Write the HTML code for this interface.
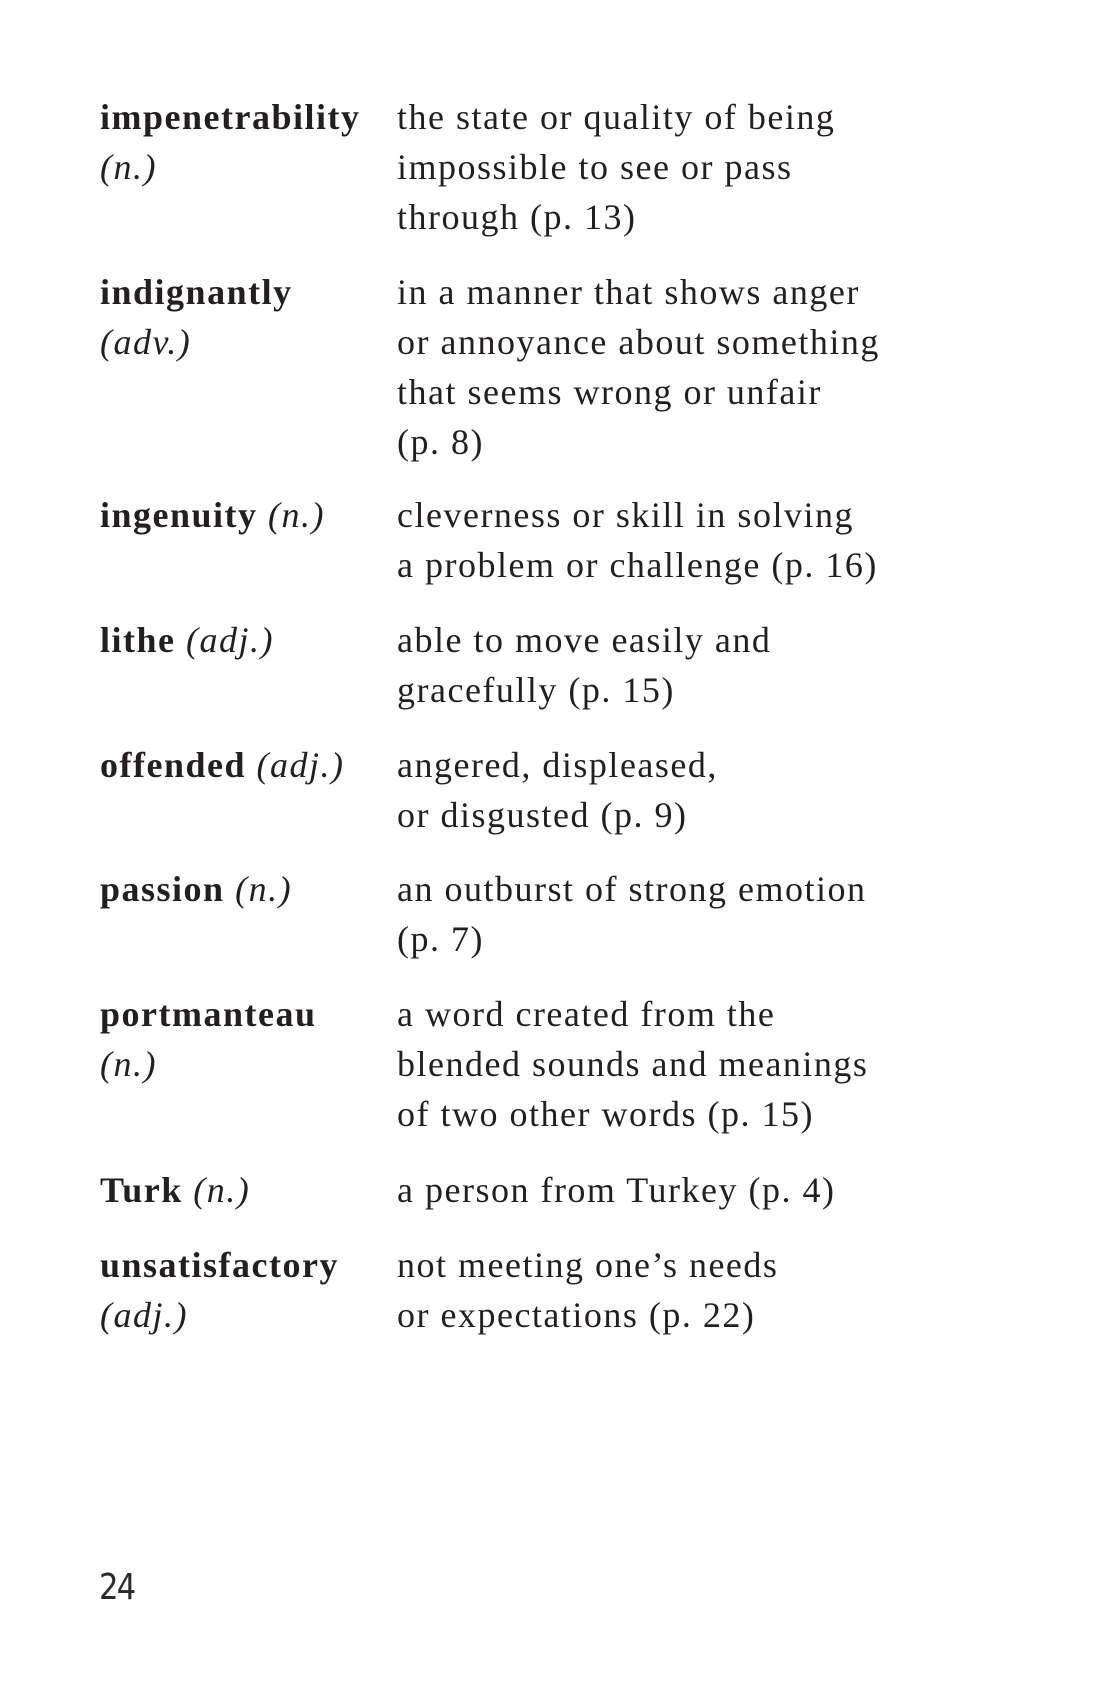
<!DOCTYPE html>
<html><head><style>
body{margin:0;width:1100px;height:1700px;background:#fff;position:relative;font-family:"Liberation Serif",serif;font-size:36px;color:#231f20;letter-spacing:1.5px}
.e{position:absolute;left:0;width:1100px;line-height:50px}
.t{position:absolute;left:100px;top:0;width:295px}
.d{position:absolute;left:397px;top:0;width:640px}
b{font-weight:bold}
i{font-style:italic}
.pg{position:absolute;left:99px;top:1567px;font-family:"DejaVu Sans","Liberation Sans",sans-serif;font-weight:normal;font-size:36px;letter-spacing:-2px;transform:scaleX(0.85);transform-origin:left;color:#2a2a2a}
</style></head><body>
<div class="e" style="top:92px"><div class="t"><b>impenetrability</b><br><i>(n.)</i></div><div class="d">the state or quality of being<br>impossible to see or pass<br>through (p. 13)</div></div>
<div class="e" style="top:267px"><div class="t"><b>indignantly</b><br><i>(adv.)</i></div><div class="d">in a manner that shows anger<br>or annoyance about something<br>that seems wrong or unfair<br>(p. 8)</div></div>
<div class="e" style="top:490px"><div class="t"><b>ingenuity</b> <i>(n.)</i></div><div class="d">cleverness or skill in solving<br>a problem or challenge (p. 16)</div></div>
<div class="e" style="top:615px"><div class="t"><b>lithe</b> <i>(adj.)</i></div><div class="d">able to move easily and<br>gracefully (p. 15)</div></div>
<div class="e" style="top:740px"><div class="t"><b>offended</b> <i>(adj.)</i></div><div class="d">angered, displeased,<br>or disgusted (p. 9)</div></div>
<div class="e" style="top:864px"><div class="t"><b>passion</b> <i>(n.)</i></div><div class="d">an outburst of strong emotion<br>(p. 7)</div></div>
<div class="e" style="top:989px"><div class="t"><b>portmanteau</b><br><i>(n.)</i></div><div class="d">a word created from the<br>blended sounds and meanings<br>of two other words (p. 15)</div></div>
<div class="e" style="top:1165px"><div class="t"><b>Turk</b> <i>(n.)</i></div><div class="d">a person from Turkey (p. 4)</div></div>
<div class="e" style="top:1240px"><div class="t"><b>unsatisfactory</b><br><i>(adj.)</i></div><div class="d">not meeting one’s needs<br>or expectations (p. 22)</div></div>
<div class="pg">24</div>
</body></html>
